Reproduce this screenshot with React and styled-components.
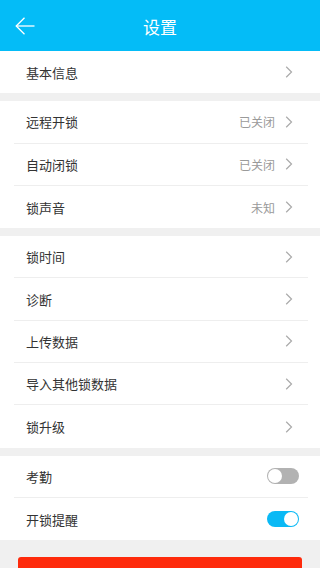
import React from "react";
import styled, { createGlobalStyle } from "styled-components";

const Global = createGlobalStyle`
  html, body { margin: 0; padding: 0; background: #f0f0f0; }
  body { font-family: "Noto Sans CJK SC", "Noto Sans", sans-serif; }
  * { box-sizing: border-box; }
`;

const Page = styled.div`
  width: 320px;
  height: 568px;
  overflow: hidden;
  background: #f0f0f0;
  display: flex;
  flex-direction: column;
`;

const Header = styled.header`
  height: 51px;
  flex-shrink: 0;
  background: #04bcf7;
  display: grid;
  grid-template-columns: 50px 1fr 50px;
  align-items: center;
`;

const BackBtn = styled.div`
  display: flex;
  align-items: center;
  justify-content: center;
  height: 51px;
`;

const Title = styled.h1`
  margin: 0;
  text-align: center;
  color: #fff;
  font-size: 17px;
  font-weight: 400;
  line-height: 1;
  padding-top: 2px;
`;

const Section = styled.section`
  background: #fff;
  flex-shrink: 0;
  margin-top: ${(p) => (p.$first ? "0" : "8px")};
  display: flex;
  flex-direction: column;
`;

const Row = styled.div`
  height: 42.3px;
  margin: 0 12px 0 14px;
  padding: 0 15px 0 12px;
  display: flex;
  align-items: center;
  border-bottom: ${(p) => (p.$last ? "none" : "1px solid #eeeeee")};
`;

const Label = styled.span`
  flex: 1;
  font-size: 13px;
  color: #333;
`;

const Value = styled.span`
  font-size: 12px;
  color: #9a9a9a;
  margin-right: 10px;
`;

const Toggle = styled.div`
  width: 32px;
  height: 16px;
  border-radius: 8px;
  background: ${(p) => (p.$on ? "#0ab9f5" : "#b2b2b2")};
  display: flex;
  justify-content: ${(p) => (p.$on ? "flex-end" : "flex-start")};
  align-items: center;
  padding: 1px;
  margin-right: -6px;
`;

const Knob = styled.div`
  width: 14px;
  height: 14px;
  border-radius: 50%;
  background: #fff;
`;

const ButtonWrap = styled.div`
  flex-shrink: 0;
  padding: 17px 18px 0;
`;

const RedButton = styled.div`
  height: 40px;
  background: #fe2a0b;
  border-radius: 3px;
`;

const Chevron = () => (
  <svg width="8" height="12" viewBox="0 0 8 12">
    <polyline points="1.2,0.8 6.5,6 1.2,11.2" fill="none" stroke="#aaaaaa" strokeWidth="1.2" />
  </svg>
);

const ArrowLeft = () => (
  <svg width="20" height="18" viewBox="0 0 20 18">
    <line x1="1" y1="9" x2="19.5" y2="9" stroke="#fff" strokeWidth="1.3" />
    <polyline points="9.5,0.7 1.2,9 9.5,17.3" fill="none" stroke="#fff" strokeWidth="1.3" />
  </svg>
);

const NavRow = ({ label, value, last }) => (
  <Row $last={last}>
    <Label>{label}</Label>
    {value && <Value>{value}</Value>}
    <Chevron />
  </Row>
);

const SwitchRow = ({ label, on, last }) => (
  <Row $last={last}>
    <Label>{label}</Label>
    <Toggle $on={on}>
      <Knob />
    </Toggle>
  </Row>
);

export default function App() {
  return (
    <Page>
      <Global />
      <Header>
        <BackBtn>
          <ArrowLeft />
        </BackBtn>
        <Title>设置</Title>
        <div />
      </Header>
      <Section $first>
        <NavRow label="基本信息" last />
      </Section>
      <Section>
        <NavRow label="远程开锁" value="已关闭" />
        <NavRow label="自动闭锁" value="已关闭" />
        <NavRow label="锁声音" value="未知" last />
      </Section>
      <Section>
        <NavRow label="锁时间" />
        <NavRow label="诊断" />
        <NavRow label="上传数据" />
        <NavRow label="导入其他锁数据" />
        <NavRow label="锁升级" last />
      </Section>
      <Section>
        <SwitchRow label="考勤" />
        <SwitchRow label="开锁提醒" on last />
      </Section>
      <ButtonWrap>
        <RedButton />
      </ButtonWrap>
    </Page>
  );
}
